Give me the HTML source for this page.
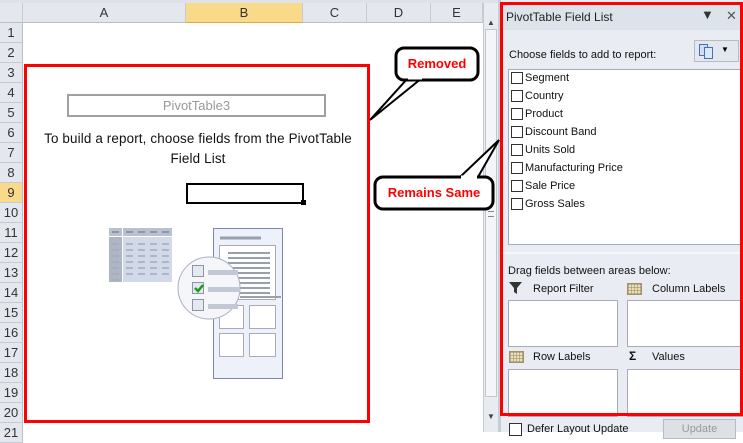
<!DOCTYPE html><html><head><style>
*{margin:0;padding:0;box-sizing:border-box}
body{width:743px;height:432px;overflow:hidden;background:#fff;font-family:"Liberation Sans",sans-serif;position:relative}
.a{position:absolute}
.ch{position:absolute;top:3px;height:20px;background:#e4e8ee;border-right:1px solid #c5cad3;border-bottom:1px solid #b9c0cb;font-size:13px;color:#333;text-align:center;line-height:20px}
.rh{position:absolute;left:0;width:23px;height:20px;background:#e4e8ee;border-bottom:1px solid #c5cad3;border-right:1px solid #b9c0cb;font-size:13px;color:#333;text-align:center;line-height:20px}
.cb{position:absolute;left:511px;width:12px;height:12px;border:1px solid #333;background:#fff}
.fl{position:absolute;left:525px;font-size:11px;color:#111}
.box{position:absolute;background:#fff;border:1px solid #aab}
.lab{position:absolute;font-size:11px;color:#111}
</style></head><body>
<div class="a" style="left:0;top:0;width:498px;height:3px;background:#dde2e9"></div>
<div class="ch" style="left:0;width:23px"></div>
<div class="ch" style="left:23px;width:163px">A</div>
<div class="ch" style="left:186px;width:117px;background:#f9d98a;border-bottom:1px solid #e3a53d">B</div>
<div class="ch" style="left:303px;width:64px">C</div>
<div class="ch" style="left:367px;width:64px">D</div>
<div class="ch" style="left:431px;width:52px">E</div>
<div class="rh" style="top:23px">1</div><div class="rh" style="top:43px">2</div><div class="rh" style="top:63px">3</div><div class="rh" style="top:83px">4</div><div class="rh" style="top:103px">5</div><div class="rh" style="top:123px">6</div><div class="rh" style="top:143px">7</div><div class="rh" style="top:163px">8</div><div class="rh" style="top:183px;background:#f9d98a">9</div><div class="rh" style="top:203px">10</div><div class="rh" style="top:223px">11</div><div class="rh" style="top:243px">12</div><div class="rh" style="top:263px">13</div><div class="rh" style="top:283px">14</div><div class="rh" style="top:303px">15</div><div class="rh" style="top:323px">16</div><div class="rh" style="top:343px">17</div><div class="rh" style="top:363px">18</div><div class="rh" style="top:383px">19</div><div class="rh" style="top:403px">20</div><div class="rh" style="top:423px">21</div>
<!-- scrollbar -->
<div class="a" style="left:483px;top:3px;width:16px;height:429px;background:#e8ebf0;border-left:1px solid #c5cad3"></div>
<div class="a" style="left:485px;top:29px;width:12px;height:368px;background:#f4f5f8;border:1px solid #c0c5ce"></div>
<div class="a" style="left:488px;top:211px;width:6px;height:6px;border-top:1px solid #888;border-bottom:1px solid #888"></div>
<div class="a" style="left:487px;top:18px;font-size:8px;color:#444">▲</div>
<div class="a" style="left:487px;top:412px;font-size:8px;color:#444">▼</div>
<div class="a" style="left:498px;top:0;width:3px;height:432px;background:#c8cdd5"></div>
<!-- pivot area -->
<div class="a" style="left:24px;top:64px;width:346px;height:359px;border:3px solid #f00;background:#fff"></div>
<div class="a" style="left:67px;top:94px;width:259px;height:23px;border:2px solid #a0a0a0;text-align:center;font-size:13px;color:#999;line-height:19px">PivotTable3</div>
<div class="a" style="left:32px;top:129px;width:332px;text-align:center;font-size:13.4px;line-height:20px;color:#111;letter-spacing:0.15px">To build a report, choose fields from the PivotTable<br>Field List</div>
<div class="a" style="left:186px;top:183px;width:118px;height:21px;border:2px solid #000"></div>
<div class="a" style="left:301px;top:200px;width:5px;height:5px;background:#000"></div>
<svg class="a" style="left:100px;top:220px" width="200" height="165">
<rect x="9" y="8" width="13" height="8" fill="#b9c0d0"/><rect x="23" y="8" width="49" height="8" fill="#b9c0d0"/>
<rect x="9" y="17" width="13" height="45" fill="#aeb6c6"/><rect x="23" y="17" width="49" height="45" fill="#d2d9e8"/>
<g stroke="#8d95a6" stroke-width="2"><line x1="12" y1="12" x2="19" y2="12"/><line x1="26" y1="12" x2="33" y2="12"/><line x1="38" y1="12" x2="45" y2="12"/><line x1="50" y1="12" x2="57" y2="12"/><line x1="62" y1="12" x2="69" y2="12"/></g>
<g stroke="#a3abbb" stroke-width="1.5"><path d="M12 24h7M12 30h7M12 36h7M12 42h7M12 48h7M12 54h7M12 60h7"/><path d="M26 24h43M26 30h43M26 36h43M26 42h43M26 48h43M26 54h43" stroke-dasharray="7 5"/></g>
<rect x="113.5" y="8.5" width="69" height="150" fill="#edf1fa" stroke="#7d8aa3"/>
<path d="M120 18h41" stroke="#98a0b0" stroke-width="3"/>
<rect x="119.5" y="25.5" width="56" height="54" fill="#fff" stroke="#aab"/>
<g stroke="#98a0b0" stroke-width="2"><path d="M128 33h42M128 38h42M128 43h42M128 48h42M128 53h42M128 58h42M128 63h42M128 68h42M128 73h42"/><path d="M140 77h41"/></g>
<g fill="#fff" stroke="#aab"><rect x="119.5" y="85.5" width="24" height="23"/><rect x="149.5" y="85.5" width="26" height="23"/><rect x="119.5" y="113.5" width="24" height="23"/><rect x="149.5" y="113.5" width="26" height="23"/></g>
<circle cx="109" cy="68" r="31" fill="#f4f6fa" stroke="#a8b0c0"/>
<g fill="#e4e8f0" stroke="#8d95a6"><rect x="92.5" y="45.5" width="11" height="11"/><rect x="92.5" y="62.5" width="11" height="11"/><rect x="92.5" y="79.5" width="11" height="11"/></g>
<path d="M95 68l3 3 5-6" stroke="#1a9a1a" stroke-width="2.5" fill="none"/>
<g fill="#c3c9d4"><rect x="108" y="50" width="30" height="5"/><rect x="108" y="67" width="32" height="5"/><rect x="108" y="84" width="30" height="5"/></g>
</svg>
<!-- callouts -->
<svg class="a" style="left:360px;top:40px" width="145" height="180">
<path d="M10 80 L48 38 L62 38 Z" fill="#fff" stroke="#000" stroke-width="2"/>
<rect x="36" y="8" width="82" height="32" rx="8" fill="#fff" stroke="#000" stroke-width="3"/>
<path d="M48 38 L62 38" stroke="#fff" stroke-width="3"/>
<path d="M139 100 L100 137 L118 137 Z" fill="#fff" stroke="#000" stroke-width="2"/>
<rect x="15" y="137" width="118" height="32" rx="8" fill="#fff" stroke="#000" stroke-width="3"/>
<path d="M101 137 L117 137" stroke="#fff" stroke-width="3"/>
<text x="77" y="28" font-family="Liberation Sans" font-weight="bold" font-size="13" fill="#f00" text-anchor="middle">Removed</text>
<text x="74" y="157" font-family="Liberation Sans" font-weight="bold" font-size="13" fill="#f00" text-anchor="middle">Remains Same</text>
</svg>
<!-- panel -->
<div class="a" style="left:501px;top:0;width:242px;height:432px;background:#e9edf3"></div>
<div class="a" style="left:501px;top:5px;width:242px;height:25px;background:#dde3ea"></div>
<div class="a" style="left:506px;top:10px;font-size:12px;color:#222">PivotTable Field List</div>
<div class="a" style="left:701px;top:7px;font-size:13px;color:#333">▼</div>
<div class="a" style="left:726px;top:8px;font-size:13px;color:#555">✕</div>
<div class="a" style="left:509px;top:49px;font-size:11px;color:#111">Choose fields to add to report:</div>
<div class="a" style="left:694px;top:40px;width:45px;height:22px;border:1px solid #b5bcc7;background:#e3e7ee"></div>
<div class="a" style="left:699px;top:44px;width:9px;height:12px;border:1px solid #4670b0;background:#cfe0f5"></div>
<div class="a" style="left:704px;top:47px;width:9px;height:12px;border:1px solid #4670b0;background:#dbe8f8"></div>
<div class="a" style="left:721px;top:45px;font-size:8px">▼</div>
<div class="a" style="left:508px;top:69px;width:235px;height:176px;background:#fff;border:1px solid #a6adb8"></div>
<div class="cb" style="top:72px"></div><div class="fl" style="top:72px">Segment</div>
<div class="cb" style="top:90px"></div><div class="fl" style="top:90px">Country</div>
<div class="cb" style="top:108px"></div><div class="fl" style="top:108px">Product</div>
<div class="cb" style="top:126px"></div><div class="fl" style="top:126px">Discount Band</div>
<div class="cb" style="top:144px"></div><div class="fl" style="top:144px">Units Sold</div>
<div class="cb" style="top:162px"></div><div class="fl" style="top:162px">Manufacturing Price</div>
<div class="cb" style="top:180px"></div><div class="fl" style="top:180px">Sale Price</div>
<div class="cb" style="top:198px"></div><div class="fl" style="top:198px">Gross Sales</div>
<div class="a" style="left:501px;top:252px;width:242px;height:2px;background:#f6f7fa"></div>
<div class="lab" style="left:508px;top:265px">Drag fields between areas below:</div>
<svg class="a" style="left:509px;top:282px" width="14" height="12"><path d="M0 0h13l-5 6v6l-3-2v-4z" fill="#333"/></svg>
<div class="lab" style="left:533px;top:283px">Report Filter</div>
<div class="a" style="left:627px;top:283px;width:15px;height:12px;background:#f2e0a8;border:1px solid #a89060;background-image:linear-gradient(#8888 1px,transparent 1px),linear-gradient(90deg,#8888 1px,transparent 1px);background-size:3px 3px"></div>
<div class="lab" style="left:652px;top:283px">Column Labels</div>
<div class="box" style="left:508px;top:300px;width:110px;height:47px"></div>
<div class="box" style="left:627px;top:300px;width:116px;height:47px"></div>
<div class="a" style="left:509px;top:351px;width:15px;height:12px;background:#f2e0a8;border:1px solid #a89060;background-image:linear-gradient(#8888 1px,transparent 1px),linear-gradient(90deg,#8888 1px,transparent 1px);background-size:3px 3px"></div>
<div class="lab" style="left:533px;top:351px">Row Labels</div>
<div class="lab" style="left:629px;top:349px;font-weight:bold;font-size:12px">Σ</div>
<div class="lab" style="left:652px;top:351px">Values</div>
<div class="box" style="left:508px;top:369px;width:110px;height:48px"></div>
<div class="box" style="left:627px;top:369px;width:116px;height:48px"></div>
<div class="cb" style="left:509px;top:423px;width:13px;height:13px"></div>
<div class="lab" style="left:527px;top:423px">Defer Layout Update</div>
<div class="a" style="left:663px;top:419px;width:73px;height:20px;background:#dde1e6;border:1px solid #b7bcc4;color:#999;font-size:11px;text-align:center;line-height:18px">Update</div>
<div class="a" style="left:500px;top:2px;width:243px;height:414px;border:3px solid #f00"></div>
</body></html>
